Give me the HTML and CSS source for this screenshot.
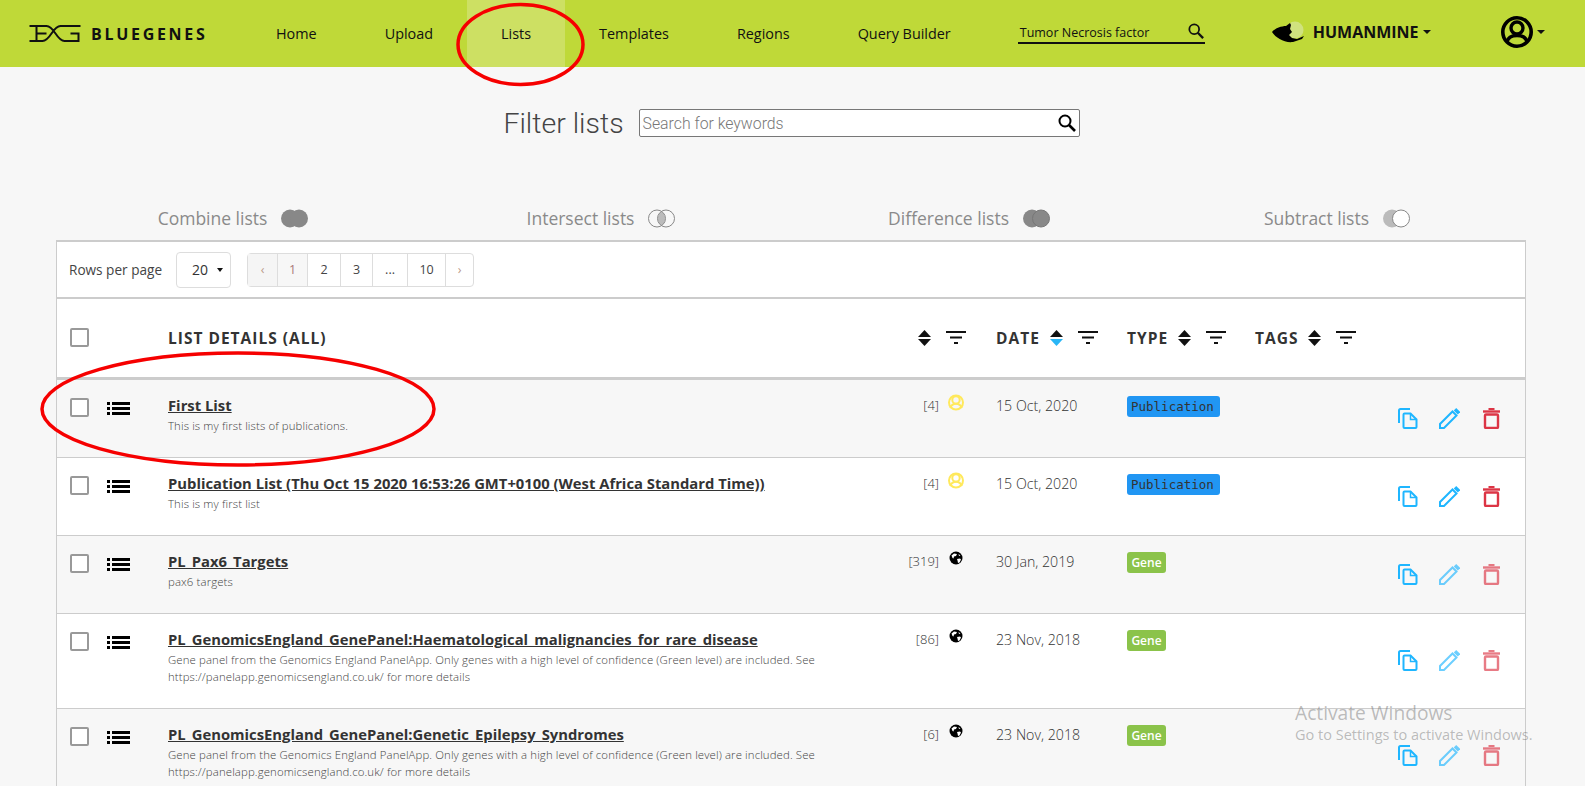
FILE: index.html
```html
<!DOCTYPE html>
<html lang="en">
<head>
<meta charset="utf-8">
<title>BlueGenes - Lists</title>
<link rel="stylesheet" href="styles.css">
</head>
<body>
<svg class="defs" width="0" height="0" aria-hidden="true">
  <symbol id="i-search" viewBox="0 0 18 18"><circle cx="7" cy="7" r="5.5" fill="none" stroke="currentColor" stroke-width="2"/><path d="M11 11l6 6" stroke="currentColor" stroke-width="2.6" fill="none"/></symbol>
  <symbol id="i-list" viewBox="0 0 23 13"><path d="M0 0h3v3H0zM5 0h18v3H5zM0 5h3v3H0zM5 5h18v3H5zM0 10h3v3H0zM5 10h18v3H5z" fill="#000"/></symbol>
  <symbol id="i-sort" viewBox="0 0 13 16"><path d="M6.5 0L13 7H0z" fill="#111"/><path d="M0 9h13l-6.500 7z" fill="#111"/></symbol>
  <symbol id="i-sort-on" viewBox="0 0 13 16"><path d="M6.500 0L13 7H0z" fill="#111"/><path d="M0 9h13l-6.500 7z" fill="#29b6f6"/></symbol>
  <symbol id="i-filter" viewBox="0 0 20 13"><path d="M0 0h20v2H0zM4 5.500h12v2H4zM8 11h4v2H8z" fill="#111"/></symbol>
  <symbol id="i-user" viewBox="0 0 16 17"><circle cx="8" cy="8.500" r="7" fill="none" stroke="currentColor" stroke-width="2"/><circle cx="8" cy="6" r="3.700" fill="none" stroke="currentColor" stroke-width="2"/><path d="M2.200 14C3.200 11 5.500 9.700 8 9.700S12.800 11 13.800 14" fill="none" stroke="currentColor" stroke-width="2"/></symbol>
  <symbol id="i-globe" viewBox="0 0 14 14"><circle cx="7" cy="7" r="6.500" fill="#000"/><path d="M2.500 4.500L5 2.500l3 .5-1 2-2 .5-.5 2-1-.5zM8 8l3-.5 1 1-1.500 3-1.500.5-.5-2.500zM9.500 3l2 1.500-1.500.5z" fill="#fff"/></symbol>
  <symbol id="i-copy" viewBox="0 0 21 21"><path d="M1 15V2.500Q1 1 2.500 1H12" fill="none" stroke="currentColor" stroke-width="2"/><path d="M5.500 6.500Q5.500 5.500 6.500 5.500H12.500L18.500 11.500V19Q18.500 20 17.500 20H6.500Q5.500 20 5.500 19Z" fill="none" stroke="currentColor" stroke-width="2"/><path d="M12.500 5.500V11.500H18.500" fill="none" stroke="currentColor" stroke-width="1.500"/></symbol>
  <symbol id="i-edit" viewBox="0 0 21 21"><path d="M1 20V16L13.500 3.500L17.500 7.500L5 20Z" fill="none" stroke="currentColor" stroke-width="2"/><path d="M16 1.200L20 5.200" stroke="currentColor" stroke-width="3.400" fill="none"/></symbol>
  <symbol id="i-trash" viewBox="0 0 21 21"><path d="M3 3.500H20" stroke="currentColor" stroke-width="2.400" fill="none"/><path d="M8.500 1H14.500" stroke="currentColor" stroke-width="2" fill="none"/><rect x="5" y="6.500" width="13" height="13.500" rx="1" fill="none" stroke="currentColor" stroke-width="2.400"/></symbol>
</svg>

<header class="nav">
  <a class="brand">
    <svg class="brand-mark" viewBox="0 0 52 19"><path d="M1 2H18M8 2V17M8 9.500H18M1 17H14C22 17 24 2 32 2H52M18 2C26 2 28 17 36 17H51M50 17V9.500H42" fill="none" stroke="#111" stroke-width="2"/></svg>
    <span class="brand-name">BLUEGENES</span>
  </a>
  <nav class="nav-links">
    <a class="nav-link">Home</a>
    <a class="nav-link">Upload</a>
    <a class="nav-link is-active">Lists</a>
    <a class="nav-link">Templates</a>
    <a class="nav-link">Regions</a>
    <a class="nav-link">Query Builder</a>
  </nav>
  <div class="nav-search">
    <span class="nav-search-text">Tumor Necrosis factor</span>
    <svg class="nav-search-icon"><use href="#i-search"/></svg>
  </div>
  <div class="mine">
    <svg class="mine-logo" viewBox="0 0 50 40"><circle cx="31" cy="18" r="8.500" fill="#d0e27f"/><path d="M8 20C11 16 18 14 22 14L26 11L27 13L26 17L28 20L25 23L28 26L33 27L40 24L38 27L29 30C20 31 12 26 8 20Z" fill="#000"/></svg>
    <span class="mine-name">HUMANMINE</span>
    <span class="caret"></span>
  </div>
  <div class="account">
    <svg class="avatar" viewBox="0 0 32 32"><circle cx="16" cy="16" r="14.200" fill="none" stroke="#000" stroke-width="3.600"/><circle cx="16" cy="12" r="6" fill="none" stroke="#000" stroke-width="3.400"/><path d="M6 26C7 21 11 19.500 16 19.500S25 21 26 26" fill="none" stroke="#000" stroke-width="3.400"/></svg>
    <span class="caret"></span>
  </div>
</header>

<main class="main">
  <div class="filter">
    <h1 class="filter-title">Filter lists</h1>
    <div class="filter-box">
      <span class="filter-placeholder">Search for keywords</span>
      <svg class="filter-icon"><use href="#i-search"/></svg>
    </div>
  </div>

  <div class="ops">
    <div class="op"><span>Combine lists</span>
      <svg class="venn" viewBox="0 0 27 19"><circle cx="9" cy="9.500" r="9" fill="#888"/><circle cx="18" cy="9.500" r="9" fill="#888"/></svg></div>
    <div class="op"><span>Intersect lists</span>
      <svg class="venn" viewBox="0 0 27 19"><path d="M13.500 2.500a8.700 8.700 0 0 1 0 14a8.700 8.700 0 0 1 0-14z" fill="#bbb"/><circle cx="9" cy="9.500" r="8.500" fill="none" stroke="#888"/><circle cx="18" cy="9.500" r="8.500" fill="none" stroke="#888"/></svg></div>
    <div class="op"><span>Difference lists</span>
      <svg class="venn" viewBox="0 0 27 19"><circle cx="9" cy="9.500" r="9" fill="#888"/><circle cx="18" cy="9.500" r="8.500" fill="#888" stroke="#777"/></svg></div>
    <div class="op"><span>Subtract lists</span>
      <svg class="venn" viewBox="0 0 27 19"><circle cx="9" cy="9.500" r="9" fill="#bbb"/><circle cx="18" cy="9.500" r="8.500" fill="#fff" stroke="#888"/></svg></div>
  </div>

  <section class="table">
    <div class="pager">
      <span class="pager-label">Rows per page</span>
      <div class="rows-select"><span>20</span><span class="caret caret-sm"></span></div>
      <ul class="pages">
        <li class="page page-prev">‹</li>
        <li class="page page-current">1</li>
        <li class="page page-w33">2</li>
        <li class="page page-w32">3</li>
        <li class="page page-w35">...</li>
        <li class="page page-w38">10</li>
        <li class="page page-next">›</li>
      </ul>
    </div>

    <div class="grid head">
      <div class="cell-check"><span class="checkbox"></span></div>
      <div class="head-label">LIST DETAILS (ALL)</div>
      <div class="head-size">
        <svg class="sort"><use href="#i-sort"/></svg>
        <svg class="funnel"><use href="#i-filter"/></svg>
      </div>
      <div class="head-col"><span class="head-label head-date">DATE</span>
        <svg class="sort"><use href="#i-sort-on"/></svg>
        <svg class="funnel"><use href="#i-filter"/></svg></div>
      <div class="head-col"><span class="head-label">TYPE</span>
        <svg class="sort"><use href="#i-sort"/></svg>
        <svg class="funnel"><use href="#i-filter"/></svg></div>
      <div class="head-col"><span class="head-label">TAGS</span>
        <svg class="sort"><use href="#i-sort"/></svg>
        <svg class="funnel"><use href="#i-filter"/></svg></div>
      <div></div>
    </div>

    <article class="grid row row-odd">
      <div class="cell-check cell-top"><span class="checkbox"></span><svg class="list-icon"><use href="#i-list"/></svg></div>
      <div class="details"><a class="title">First List</a><p class="desc">This is my first lists of publications.</p></div>
      <div class="size"><span class="count">[4]</span><svg class="owner owner-user"><use href="#i-user"/></svg></div>
      <div class="date">15 Oct, 2020</div>
      <div class="type"><span class="badge badge-pub">Publication</span></div>
      <div></div>
      <div class="actions">
        <svg class="act act-copy"><use href="#i-copy"/></svg>
        <svg class="act act-edit"><use href="#i-edit"/></svg>
        <svg class="act act-trash"><use href="#i-trash"/></svg>
      </div>
    </article>

    <article class="grid row">
      <div class="cell-check cell-top"><span class="checkbox"></span><svg class="list-icon"><use href="#i-list"/></svg></div>
      <div class="details"><a class="title">Publication List (Thu Oct 15 2020 16:53:26 GMT+0100 (West Africa Standard Time))</a><p class="desc">This is my first list</p></div>
      <div class="size"><span class="count">[4]</span><svg class="owner owner-user"><use href="#i-user"/></svg></div>
      <div class="date">15 Oct, 2020</div>
      <div class="type"><span class="badge badge-pub">Publication</span></div>
      <div></div>
      <div class="actions">
        <svg class="act act-copy"><use href="#i-copy"/></svg>
        <svg class="act act-edit"><use href="#i-edit"/></svg>
        <svg class="act act-trash"><use href="#i-trash"/></svg>
      </div>
    </article>

    <article class="grid row row-odd">
      <div class="cell-check cell-top"><span class="checkbox"></span><svg class="list-icon"><use href="#i-list"/></svg></div>
      <div class="details"><a class="title">PL_Pax6_Targets</a><p class="desc">pax6 targets</p></div>
      <div class="size"><span class="count">[319]</span><svg class="owner owner-globe"><use href="#i-globe"/></svg></div>
      <div class="date">30 Jan, 2019</div>
      <div class="type"><span class="badge badge-gene">Gene</span></div>
      <div></div>
      <div class="actions">
        <svg class="act act-copy"><use href="#i-copy"/></svg>
        <svg class="act act-edit is-faded"><use href="#i-edit"/></svg>
        <svg class="act act-trash is-faded"><use href="#i-trash"/></svg>
      </div>
    </article>

    <article class="grid row">
      <div class="cell-check cell-top"><span class="checkbox"></span><svg class="list-icon"><use href="#i-list"/></svg></div>
      <div class="details"><a class="title">PL_GenomicsEngland_GenePanel:Haematological_malignancies_for_rare_disease</a><p class="desc">Gene panel from the Genomics England PanelApp. Only genes with a high level of confidence (Green level) are included. See https://panelapp.genomicsengland.co.uk/ for more details</p></div>
      <div class="size"><span class="count">[86]</span><svg class="owner owner-globe"><use href="#i-globe"/></svg></div>
      <div class="date">23 Nov, 2018</div>
      <div class="type"><span class="badge badge-gene">Gene</span></div>
      <div></div>
      <div class="actions">
        <svg class="act act-copy"><use href="#i-copy"/></svg>
        <svg class="act act-edit is-faded"><use href="#i-edit"/></svg>
        <svg class="act act-trash is-faded"><use href="#i-trash"/></svg>
      </div>
    </article>

    <article class="grid row row-odd">
      <div class="cell-check cell-top"><span class="checkbox"></span><svg class="list-icon"><use href="#i-list"/></svg></div>
      <div class="details"><a class="title">PL_GenomicsEngland_GenePanel:Genetic_Epilepsy_Syndromes</a><p class="desc">Gene panel from the Genomics England PanelApp. Only genes with a high level of confidence (Green level) are included. See https://panelapp.genomicsengland.co.uk/ for more details</p></div>
      <div class="size"><span class="count">[6]</span><svg class="owner owner-globe"><use href="#i-globe"/></svg></div>
      <div class="date">23 Nov, 2018</div>
      <div class="type"><span class="badge badge-gene">Gene</span></div>
      <div></div>
      <div class="actions">
        <svg class="act act-copy"><use href="#i-copy"/></svg>
        <svg class="act act-edit is-faded"><use href="#i-edit"/></svg>
        <svg class="act act-trash is-faded"><use href="#i-trash"/></svg>
      </div>
    </article>
  </section>
</main>

<svg class="annotations" viewBox="0 0 1585 786" aria-hidden="true">
  <ellipse cx="520.500" cy="44.500" rx="62.500" ry="40" />
  <ellipse cx="238" cy="409" rx="196" ry="56" />
</svg>

<aside class="watermark">
  <div class="watermark-title">Activate Windows</div>
  <div class="watermark-sub">Go to Settings to activate Windows.</div>
</aside>
</body>
</html>
```

FILE: styles.css
```css
* { box-sizing: border-box; }
html, body { height: 100%; }
body {
  margin: 0;
  background: #f7f7f7;
  font-family: "Open Sans", "Liberation Sans", sans-serif;
  color: #333;
  overflow: hidden;
}
.defs { position: absolute; }
p, h1, ul { margin: 0; padding: 0; }

/* nav */
.nav {
  display: flex;
  align-items: center;
  height: 67px;
  background: #bfd938;
  color: #111;
}
.brand {
  display: flex;
  align-items: center;
  width: 242px;
  padding-left: 28px;
}
.brand-mark { width: 53px; height: 19px; margin-right: 10px; }
.brand-name { font-weight: 700; font-size: 16px; letter-spacing: 2.700px; color: #111; }
.nav-links { display: flex; align-self: stretch; }
.nav-link {
  display: flex;
  align-items: center;
  padding: 0 34px;
  font-size: 14.400px;
  color: #111;
}
.nav-link.is-active { background: #cde063; }
.nav-search {
  display: flex;
  align-items: center;
  justify-content: space-between;
  width: 187px;
  height: 27px;
  margin-left: 33px;
  margin-top: -7px;
  padding: 6px 1px 0 2px;
  border-bottom: 2px solid #111;
}
.nav-search-text { font-size: 12.500px; color: #111; }
.nav-search-icon { width: 16px; height: 16px; color: #111; margin-top: -2px; }
.mine { display: flex; align-items: center; margin-left: 59px; margin-top: -3px; }
.mine-logo { width: 50px; height: 40px; margin-right: -1px; }
.mine-name { font-weight: 700; font-size: 16px; color: #111; margin-right: 4px; }
.caret {
  display: inline-block;
  width: 0;
  height: 0;
  border-left: 4px solid transparent;
  border-right: 4px solid transparent;
  border-top: 4px solid #111;
}
.account { display: flex; align-items: center; margin-left: auto; padding-right: 40px; margin-top: -3px; }
.avatar { width: 32px; height: 32px; margin-right: 4px; }

/* filter */
.filter {
  display: flex;
  align-items: flex-start;
  justify-content: center;
  gap: 15px;
  padding: 42px 2px 0 0;
}
.filter-title {
  height: 28px;
  font-family: Roboto, sans-serif;
  font-weight: 300;
  font-size: 28.500px;
  line-height: 30px;
  color: #444;
}
.filter-box {
  display: flex;
  align-items: center;
  justify-content: space-between;
  width: 441px;
  height: 28px;
  padding: 0 3px 0 3px;
  background: #fff;
  border: 1px solid #777;
  border-radius: 2px;
}
.filter-placeholder {
  font-family: Roboto, sans-serif;
  font-weight: 300;
  font-size: 15.800px;
  color: #777;
}
.filter-icon { width: 18px; height: 18px; color: #000; }

/* set operations */
.ops {
  display: grid;
  grid-template-columns: repeat(4, 1fr);
  margin: 72px 64px 0 49px;
  height: 19px;
}
.op {
  display: flex;
  align-items: center;
  justify-content: center;
  gap: 14px;
  font-size: 17.500px;
  line-height: 19px;
  color: #8a8a8a;
}
.venn { width: 27px; height: 19px; }

/* table */
.table {
  margin: 12px 59px 0 56px;
  background: #fff;
  border-top: 2px solid #ccc;
  border-left: 1px solid #ccc;
  border-right: 1px solid #ccc;
}
.pager {
  display: flex;
  align-items: center;
  height: 57px;
  padding: 0 0 0 12px;
  border-bottom: 2px solid #ccc;
}
.pager-label { font-size: 13.600px; color: #444; }
.rows-select {
  display: flex;
  align-items: center;
  width: 55px;
  height: 36px;
  margin: 0 16px 0 14px;
  padding-left: 15px;
  gap: 9px;
  font-size: 14px;
  color: #333;
  background: #fff;
  border: 1px solid #ddd;
  border-radius: 4px;
}
.caret-sm { border-left-width: 3px; border-right-width: 3px; }
.pages {
  display: flex;
  list-style: none;
  height: 34px;
  border: 1px solid #ddd;
  border-radius: 4px;
}
.page {
  display: flex;
  align-items: center;
  justify-content: center;
  border-left: 1px solid #ddd;
  font-size: 12.500px;
  color: #444;
  width: 30px;
}
.page-prev { width: 29px; border-left: 0; background: #f5f5f5; color: #b98; }
.page-current { background: #f7f7f7; color: #a77; }
.page-w33 { width: 33px; }
.page-w32 { width: 32px; }
.page-w35 { width: 35px; }
.page-w38 { width: 38px; }
.page-next { width: 28px; color: #b98; }

.grid {
  display: grid;
  grid-template-columns: 111px 722px 106px 131px 128px 128px 142px;
}
.head {
  align-items: center;
  height: 81px;
  padding-bottom: 1px;
  border-bottom: 3px solid #ccc;
}
.head-label {
  font-weight: 700;
  font-size: 15.500px;
  letter-spacing: 1px;
  color: #333;
}
.cell-check { display: flex; align-items: flex-start; padding-left: 13px; }
.checkbox {
  display: block;
  flex: none;
  width: 19px;
  height: 19px;
  background: #fff;
  border: 2px solid #999;
  border-radius: 2px;
}
.head-size { display: flex; align-items: center; padding-left: 28px; gap: 15px; }
.head-col { display: flex; align-items: center; gap: 10px; }
.head-col .funnel { margin-left: 5px; }
.sort { width: 13px; height: 16px; flex: none; }
.funnel { width: 20px; height: 13px; flex: none; }

.row {
  border-bottom: 1px solid #ccc;
  background: #fff;
}
.row-odd { background: #f7f7f7; }
.cell-top { padding-top: 18px; }
.list-icon { width: 23px; height: 13px; margin: 4px 0 0 18px; flex: none; }
.details { padding: 15px 0 23px; }
.title {
  display: block;
  font-weight: 700;
  font-size: 14.800px;
  line-height: 20px;
  color: #333;
  text-decoration: underline;
  white-space: nowrap;
}
.desc {
  width: 665px;
  margin-top: 2px;
  font-size: 11.400px;
  font-weight: 300;
  letter-spacing: .12px;
  line-height: 17px;
  color: #444;
}
.size { display: flex; align-items: flex-start; padding-top: 15px; }
.count {
  width: 49px;
  font-size: 13px;
  font-weight: 300;
  line-height: 20px;
  text-align: right;
  color: #333;
}
.owner { flex: none; }
.owner-user { width: 16px; height: 17px; margin: -1px 0 0 9px; color: #ffe95c; }
.owner-globe { width: 14px; height: 14px; margin: 0 0 0 10px; }
.date {
  padding-top: 16px;
  font-size: 14.200px;
  font-weight: 300;
  line-height: 20px;
  color: #333;
}
.type { display: flex; align-items: flex-start; padding-top: 16px; }
.badge {
  display: block;
  height: 21px;
  padding: 0 4px;
  border-radius: 3px;
  font-size: 12px;
  line-height: 21px;
}
.badge-pub {
  width: 93px;
  font-family: "DejaVu Sans Mono", "Liberation Mono", monospace;
  font-size: 12.500px;
  color: #333;
  background: #2196f3;
}
.badge-gene { width: 39px; color: #fff; font-weight: 600; background: #8bc34a; text-align: center; }
.actions { display: flex; align-self: center; gap: 20px; padding: 0 0 1px 15px; }
.act { width: 21px; height: 21px; flex: none; }
.act-copy, .act-edit { color: #1fb6ff; }
.act-trash { color: #dc3545; }
.is-faded { opacity: .65; }

/* over everything */
.annotations {
  position: absolute;
  top: 0;
  left: 0;
  width: 1585px;
  height: 786px;
  pointer-events: none;
  fill: none;
  stroke: #f60000;
  stroke-width: 3.500px;
}
.watermark {
  position: absolute;
  left: 1295px;
  top: 700px;
  color: rgba(110, 110, 110, .45);
}
.watermark-title { font-size: 19.200px; line-height: 25px; }
.watermark-sub { font-size: 14.500px; line-height: 20px; white-space: nowrap; }
```
